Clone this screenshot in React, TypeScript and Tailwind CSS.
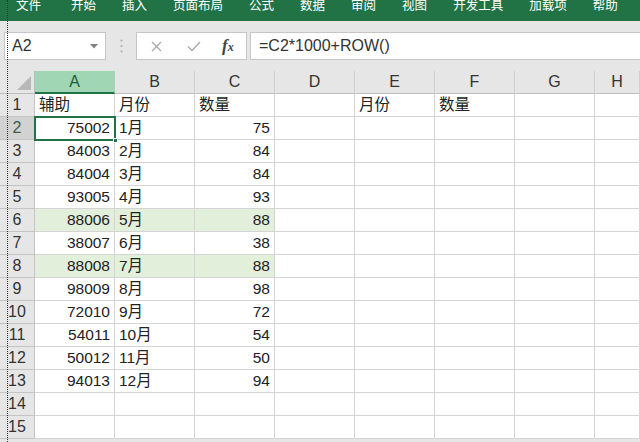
import React from "react";

const tabs = ["文件", "开始", "插入", "页面布局", "公式", "数据", "审阅", "视图", "开发工具", "加载项", "帮助"];
const cols = ["A", "B", "C", "D", "E", "F", "G", "H"];

type Row = { a?: string; b?: string; c?: string; e?: string; f?: string; hl?: boolean };

const rows: Row[] = [
  { a: "辅助", b: "月份", c: "数量", e: "月份", f: "数量" },
  { a: "75002", b: "1月", c: "75" },
  { a: "84003", b: "2月", c: "84" },
  { a: "84004", b: "3月", c: "84" },
  { a: "93005", b: "4月", c: "93" },
  { a: "88006", b: "5月", c: "88", hl: true },
  { a: "38007", b: "6月", c: "38" },
  { a: "88008", b: "7月", c: "88", hl: true },
  { a: "98009", b: "8月", c: "98" },
  { a: "72010", b: "9月", c: "72" },
  { a: "54011", b: "10月", c: "54" },
  { a: "50012", b: "11月", c: "50" },
  { a: "94013", b: "12月", c: "94" },
  {},
  {},
];

const font = { fontFamily: '"Liberation Sans", "Noto Sans CJK SC", sans-serif' };

const Cell = ({ text, align, hl, first }: { text?: string; align: "l" | "r"; hl?: boolean; first?: boolean }) => (
  <div
    className={`h-[23px] border-r border-b border-[#d4d4d4] flex items-end pb-[1px] text-[15.5px] leading-[20px] text-[#222] whitespace-nowrap ${
      align === "r" && !first ? "justify-end pr-[4px]" : "justify-start pl-[4px]"
    } ${hl ? "bg-[#e2efda]" : "bg-white"}`}
  >
    {text}
  </div>
);

export default function App() {
  return (
    <div className="relative w-[640px] h-[442px] overflow-hidden bg-[#e6e6e6]" style={font}>
      {/* ribbon tabs */}
      <div className="h-[21px] bg-[#217346] flex items-start pl-[16px] gap-[26px] overflow-hidden">
        {tabs.map((t, i) => (
          <span
            key={t}
            className={`text-white text-[12.5px] leading-[13px] whitespace-nowrap ${i === 1 ? "ml-[4px]" : ""}`}
          >
            {t}
          </span>
        ))}
      </div>

      {/* formula bar */}
      <div className="h-[50px] flex items-start pt-[11px]">
        <div className="ml-[4px] w-[102px] h-[28px] bg-white border border-[#c6c6c6] flex items-center justify-between pl-[7px] pr-[7px]">
          <span className="text-[16px] text-[#333]">A2</span>
          <svg width="8" height="5" viewBox="0 0 8 5">
            <path d="M0 0h8L4 4.5z" fill="#808080" />
          </svg>
        </div>
        <div className="w-[30px] h-[28px] flex items-center justify-center">
          <svg width="3" height="14" viewBox="0 0 3 14">
            <circle cx="1.5" cy="1.5" r="1.1" fill="#b0b0b0" />
            <circle cx="1.5" cy="7" r="1.1" fill="#b0b0b0" />
            <circle cx="1.5" cy="12.5" r="1.1" fill="#b0b0b0" />
          </svg>
        </div>
        <div className="w-[111px] h-[28px] bg-white border border-[#c6c6c6] flex items-center pl-[14px]">
          <svg width="11" height="11" viewBox="0 0 11 11">
            <path d="M1 1l9 9M10 1l-9 9" stroke="#a8a8a8" strokeWidth="1.3" />
          </svg>
          <svg width="14" height="11" viewBox="0 0 14 11" className="ml-[25px]">
            <path d="M1 5.5l4 4L13 1" stroke="#a8a8a8" strokeWidth="1.3" fill="none" />
          </svg>
          <span
            className="ml-[21px] text-[17px] leading-[17px] text-[#444] italic font-bold"
            style={{ fontFamily: '"Liberation Serif", serif' }}
          >
            f<span className="text-[12px]">x</span>
          </span>
        </div>
        <div className="ml-[3px] flex-1 h-[28px] bg-white border-y border-l border-[#c6c6c6] flex items-center pl-[8px]">
          <span className="text-[16px] text-[#333]">=C2*1000+ROW()</span>
        </div>
      </div>

      {/* grid */}
      <div className="grid grid-cols-[35px_repeat(7,80px)_1fr]">
        <div className="h-[23px] bg-[#e6e6e6] border-r border-b border-[#bdbdbd] relative">
          <svg width="14" height="14" viewBox="0 0 14 14" className="absolute right-[3px] bottom-[3px]">
            <path d="M14 0v14H0z" fill="#b8b8b8" />
          </svg>
        </div>
        {cols.map((c) => (
          <div
            key={c}
            className={`h-[23px] flex items-center justify-center text-[16px] ${
              c === "A"
                ? "bg-[#a0d6b4] text-[#1e5c3a] border-b-2 border-b-[#217346] border-r border-r-[#a0d6b4]"
                : "bg-[#e6e6e6] text-[#333] border-b border-b-[#bdbdbd] border-r border-r-[#cfcfcf]"
            }`}
          >
            {c}
          </div>
        ))}

        {rows.map((r, i) => (
          <React.Fragment key={i}>
            <div
              className={`h-[23px] border-r border-b border-[#c4c4c4] flex items-center justify-center text-[16px] ${
                i === 1 ? "bg-[#d2d2d2] text-[#3a5f48]" : "bg-[#e6e6e6] text-[#333]"
              }`}
            >
              {i + 1}
            </div>
            <Cell text={r.a} align="r" hl={r.hl} first={i === 0} />
            <Cell text={r.b} align="l" hl={r.hl} />
            <Cell text={r.c} align="r" hl={r.hl} first={i === 0} />
            <Cell align="l" />
            <Cell text={r.e} align="l" />
            <Cell text={r.f} align="l" />
            <Cell align="l" />
            <Cell align="l" />
          </React.Fragment>
        ))}
      </div>

      {/* active cell A2 */}
      <div className="absolute left-[34px] top-[116px] w-[82px] h-[25px] border-2 border-[#217346] pointer-events-none" />
      <div className="absolute left-[113px] top-[138px] w-[5px] h-[5px] bg-[#217346] border border-white pointer-events-none" />

      {/* dotted page break line */}
      <div className="absolute left-[7px] top-0 h-full border-l border-dotted border-[#333] pointer-events-none" />
    </div>
  );
}
